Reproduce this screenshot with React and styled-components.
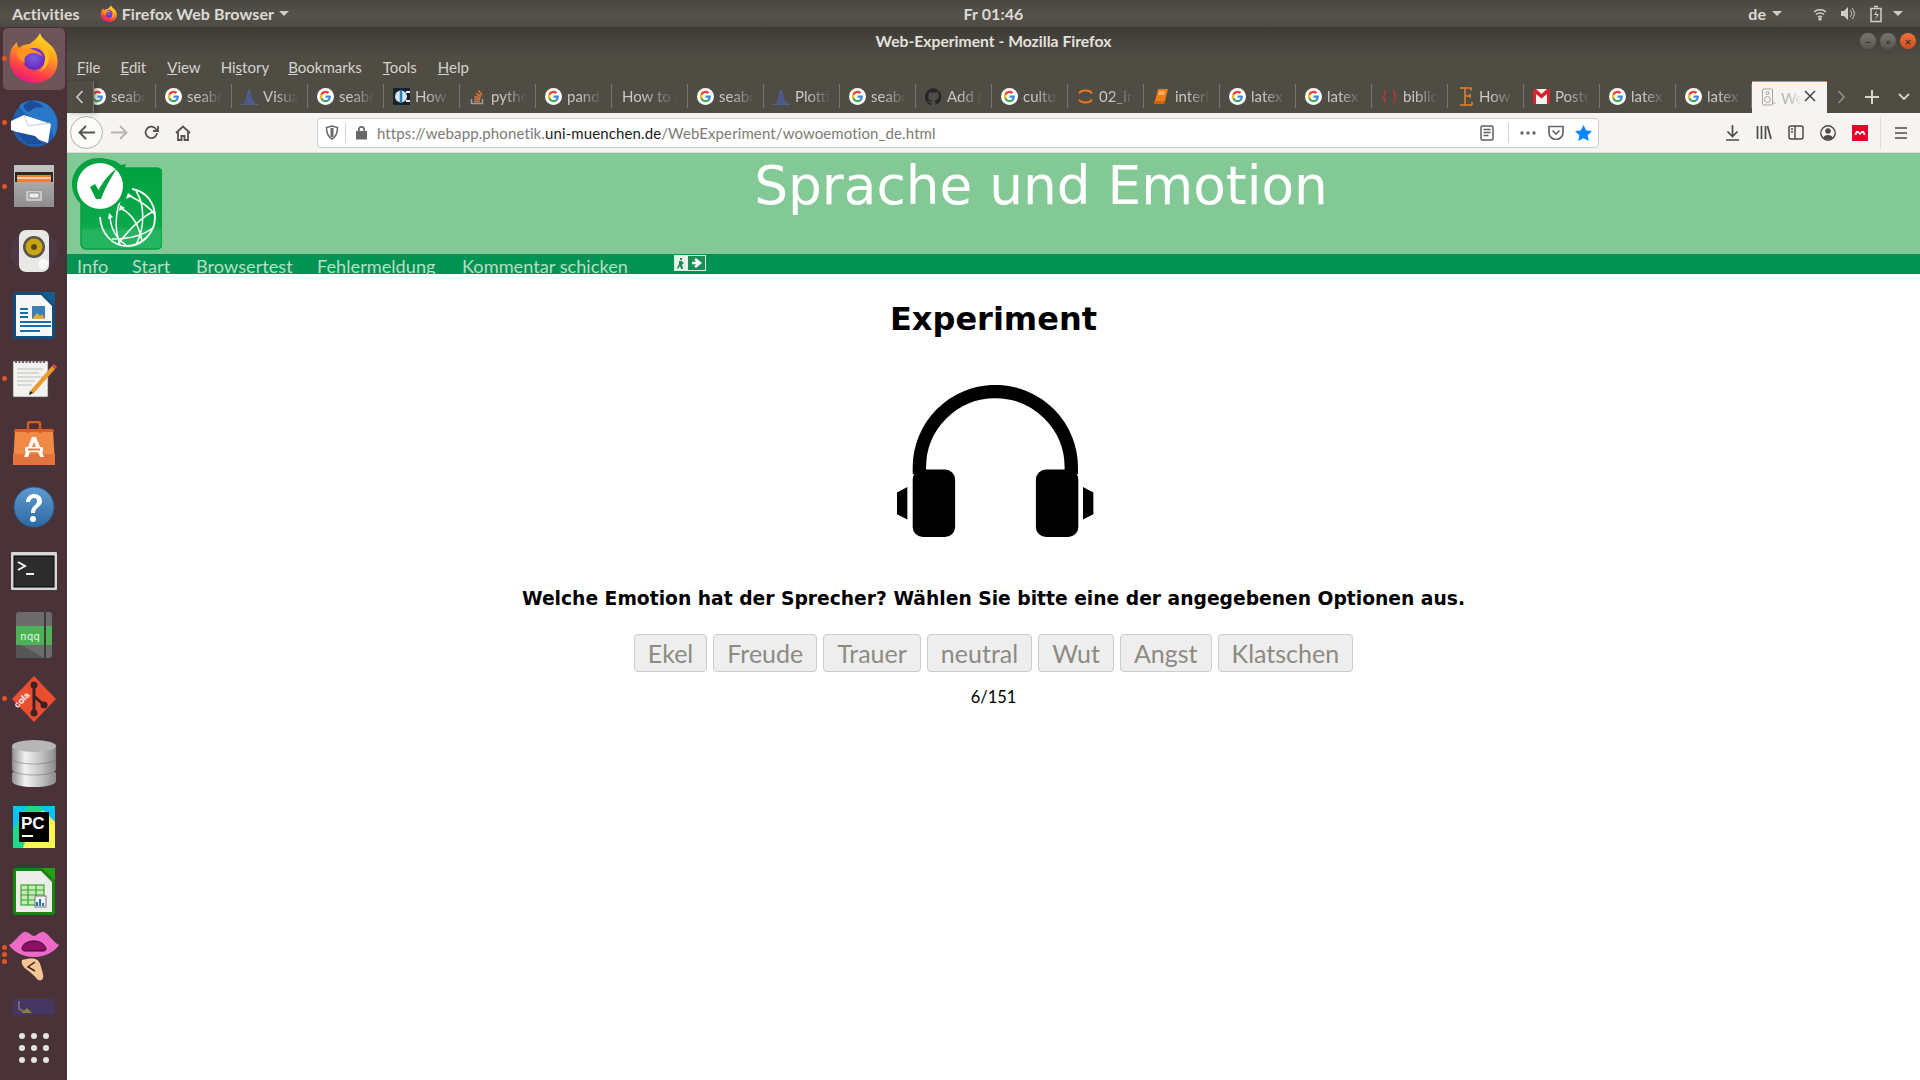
import React from "react";
import styled, { createGlobalStyle } from "styled-components";

const Global = createGlobalStyle`
  html, body { margin: 0; padding: 0; width: 1920px; height: 1080px; overflow: hidden; background: #fff; }
  * { box-sizing: border-box; }
  body { font-family: "Lato", "Noto Sans", sans-serif; }
`;
const Screen = styled.div`display: flex; flex-direction: column; width: 1920px; height: 1080px;`;
const TopBar = styled.header`
  height: 27px; display: flex; align-items: center; position: relative; flex: none;
  background: linear-gradient(#4a4842, #55524b 60%, #4c4a43);
  color: #dcdad5; font-size: 16px; font-weight: 700; letter-spacing: .1px; padding: 0 0 0 12px;
`;
const TopLabel = styled.span`margin-left: ${p => p.$ml || 0}px; white-space: nowrap;`;
const Clock = styled.span`position: absolute; left: 67px; right: 0; text-align: center; pointer-events: none;`;
const TopIcon = styled.span`display: flex; margin-left: ${p => p.$ml || 0}px;`;
const Caret = styled.span`
  width: 0; height: 0; margin-left: ${p => p.$ml || 0}px;
  border-left: 5px solid transparent; border-right: 5px solid transparent; border-top: 5px solid #cfcdc8;
`;
const Main = styled.div`flex: 1; display: flex; min-height: 0;`;
const Dock = styled.nav`width: 67px; flex: none; display: flex; flex-direction: column; background: #4a3338;`;
const DockItem = styled.div`
  height: ${p => p.$h || 64}px; display: flex; align-items: ${p => p.$top ? "flex-start" : "center"}; justify-content: center; position: relative; flex: none;
  margin-top: ${p => p.$auto ? "auto" : 0}; padding-top: ${p => p.$pt || 0}px;
`;
const DockHighlight = styled.div`
  width: 62px; height: 62px; border-radius: 5px; background: #6d5559; display: flex; align-items: center; justify-content: center;
`;
const Pip = styled.i`position: absolute; left: 2px; top: ${p => p.$top ?? 29}px; width: 5px; height: 5px; border-radius: 50%; background: #e95420;`;
const Win = styled.div`flex: 1; display: flex; flex-direction: column; min-width: 0;`;
const TitleBar = styled.div`
  height: 29px; flex: none; display: flex; align-items: center; justify-content: center; position: relative; padding-bottom: 2px;
  background: linear-gradient(#3d3b35, #4f4c44); color: #e3e1dc; font-size: 15.7px; font-weight: 700;
`;
const WinButtons = styled.div`position: absolute; right: 4px; top: 6px; display: flex; gap: 4px;`;
const WinButton = styled.span`
  width: 16px; height: 16px; border-radius: 50%; display: flex; align-items: center; justify-content: center;
  background: ${p => p.$close ? "linear-gradient(#f0703c,#d24d1c)" : "linear-gradient(#78756e,#59564f)"};
  color: #37352f; font-size: 11px; line-height: 1;
`;
const MenuBar = styled.div`
  height: 25px; flex: none; display: flex; align-items: center; background: #4f4c44; padding: 0 0 4px 10px; color: #d5d3cd; font-size: 15px;
`;
const MenuItem = styled.span`margin-right: ${p => p.$mr}px; white-space: nowrap;`;
const Mn = styled.span`text-decoration: underline;`;
const TabBar = styled.div`height: 32px; flex: none; display: flex; align-items: stretch; background: #4f4c44; color: #c9c7c0; position: relative;`;
const TabArrow = styled.div`width: 27px; flex: none; display: flex; align-items: center; justify-content: center; border-right: 1px solid #77756e; z-index: 1; box-shadow: 3px 0 4px rgba(30,30,30,.35);`;
const TabStrip = styled.div`width: 1733px; flex: none; overflow: hidden; display: flex;`;
const Tab = styled.div`
  width: 76px; flex: none; display: flex; align-items: center; position: relative; padding: 0 0 2px ${p => p.$plain ? 10 : 9}px; font-size: 15px; gap: 5px;
  margin-left: ${p => p.$first ? -14 : 0}px;
  &::after { content: ""; position: absolute; right: 0; top: 3px; bottom: 5px; width: 1px; background: ${p => p.$noline ? "transparent" : "#77756e"}; }
`;
const ActiveTab = styled(Tab)`
  background: #f5f4f2; border-top: 2px solid #ee7d53; color: #b8b6b0; width: 75px; margin-top: -1px; padding: 0 0 0 9px;
`;
const TabText = styled.span`
  white-space: nowrap; overflow: hidden; flex: 1; min-width: 0; margin-right: ${p => p.$mr ?? 10}px;
  mask-image: linear-gradient(to right, #000 35%, transparent 100%);
  -webkit-mask-image: linear-gradient(to right, #000 35%, transparent 100%);
`;
const TabClose = styled.span`position: absolute; right: 10px; top: 7px; display: flex;`;
const TabTool = styled.span`position: absolute; top: 0; bottom: 0; left: ${p => p.$x}px; display: flex; align-items: center;`;
const Toolbar = styled.div`height: 40px; flex: none; background: #f5f4f2; display: flex; align-items: center; position: relative; padding-left: 3px; border-bottom: 1px solid #dedcd8;`;
const BackCircle = styled.div`width: 33px; height: 33px; border-radius: 50%; border: 1px solid #b5b3ae; background: #fbfbfa; display: flex; align-items: center; justify-content: center; flex: none;`;
const NavIcon = styled.span`width: 32px; flex: none; display: flex; justify-content: center; align-items: center;`;
const UrlBar = styled.div`
  margin-left: 118px; width: 1282px; height: 30px; flex: none; border: 1px solid #cfcdc9; border-radius: 4px; background: #fff; display: flex; align-items: center; font-size: 15px; padding: 0 6px 0 7px;
`;
const UrlSep = styled.span`width: 1px; height: 20px; background: #d5d3cf; margin: ${p => p.$m || "0 6px"}; flex: none;`;
const Url = styled.span`color: #7d7a75; white-space: nowrap; margin-left: 9px; letter-spacing: .11px; flex: 1;`;
const UrlHost = styled.span`color: #1c1b1a;`;
const UrlIcon = styled.span`display: flex; flex: none; margin-left: ${p => p.$ml || 0}px; margin-right: ${p => p.$mr || 0}px;`;
const ToolRight = styled.div`display: flex; align-items: center; margin-left: 117px;`;
const ToolSlot = styled.span`width: 32px; display: flex; justify-content: center; flex: none;`;
const ToolDiv = styled.span`width: 1px; height: 32px; background: #dedcd8; margin: 0 4px 0 4px; flex: none;`;
const Page = styled.div`flex: 1; display: flex; flex-direction: column; background: #fff; min-height: 0;`;
const SiteHeader = styled.div`height: 101px; flex: none; background: #82c995; display: flex; padding: 2px 0 0 3px;`;
const SiteTitle = styled.h1`
  flex: 1; margin: 0; text-align: center; font: 400 53.3px/62px "DejaVu Sans", sans-serif; color: #fff;
`;
const SiteNav = styled.div`height: 20px; flex: none; background: #009353; display: flex; align-items: center; padding-left: 10px; color: #b9dfc5; font-size: 18.2px; overflow: hidden; position: relative;`;
const SiteLink = styled.span`width: ${p => p.$w}px; flex: none; white-space: nowrap; line-height: 20px; position: relative; top: 2px;`;
const Underlined = styled.span`border-bottom: 1px solid #d7eedd; display: inline-block; line-height: 17px;`;
const ExitBox = styled.span`display: flex; position: relative; top: -1px;`;
const Content = styled.main`flex: 1; display: flex; flex-direction: column; align-items: center; padding-top: 25px;`;
const Heading = styled.h2`margin: 0; font: 700 32px/40px "DejaVu Sans", sans-serif; color: #000;`;
const HeadphonesWrap = styled.div`margin-top: 46px; display: flex; height: 152px; padding-left: 3px;`;
const Question = styled.p`margin: 50px 0 0; font: 700 18.72px/24px "DejaVu Sans", sans-serif; color: #000;`;
const Choices = styled.div`margin-top: 23px; display: flex; gap: 6px;`;
const Choice = styled.button`
  height: 38px; padding: 0 13px; font: 400 25px/36px "Lato", sans-serif; color: #8f8a82; background: #eee; border: 1px solid #ccc; border-radius: 4px;
`;
const Counter = styled.div`margin-top: 15px; font-size: 16.5px; line-height: 20px; color: #000;`;

const G = () => (
  <svg width="17" height="17" viewBox="0 0 24 24" style={{ flex: "none" }}>
    <circle cx="12" cy="12" r="12" fill="#fff" />
    <path d="M19.6 12.2c0-.6-.1-1.1-.2-1.6H12v3h4.3c-.2 1-.7 1.8-1.6 2.4v2h2.5c1.5-1.3 2.4-3.3 2.4-5.8z" fill="#4285f4" />
    <path d="M12 20c2.1 0 3.9-.7 5.2-1.9l-2.5-2c-.7.5-1.6.8-2.7.8-2.1 0-3.8-1.4-4.4-3.3H5v2c1.3 2.6 4 4.4 7 4.4z" fill="#34a853" />
    <path d="M7.6 13.6c-.3-1-.3-2.2 0-3.2v-2H5c-1.1 2.2-1.1 5 0 7.2z" fill="#fbbc05" />
    <path d="M12 7.2c1.2 0 2.2.4 3 1.2l2.2-2.2C15.900 5 14.100 4 12 4 9 4 6.300 5.800 5 8.400l2.600 2c.6-1.900 2.300-3.200 4.400-3.200z" fill="#ea4335" />
  </svg>
);
const Peak = () => (
  <svg width="17" height="17" viewBox="0 0 17 17" style={{ flex: "none" }}>
    <path d="M0 16.500C4 16 5 14 6 8c.5-3 1-6 2-6s1.500 3 2 6c1 5 3 8 7 8.500z" fill="#4b5a8c" stroke="#5d6da3" strokeWidth=".5" />
  </svg>
);
const Favicons = {
  g: <G />,
  peak: <Peak />,
  how: (
    <svg width="17" height="17" viewBox="0 0 17 17" style={{ flex: "none" }}>
      <rect width="17" height="17" fill="#15222f" />
      <circle cx="8" cy="8.500" r="6" fill="#d6e7f0" />
      <path d="M8 2v13" stroke="#2d7fb8" strokeWidth="2.500" />
      <path d="M13 4h4M13 13h4" stroke="#e6eef3" strokeWidth="2" />
    </svg>
  ),
  so: (
    <svg width="17" height="17" viewBox="0 0 17 17" fill="none" stroke="#e8742a" strokeWidth="1.500" style={{ flex: "none" }}>
      <path d="M2.500 11v4.500h11V11" stroke="#a99" />
      <path d="M5 13.500h6M5 11l6 .6M5.500 8.500l6 1.500M7 5.500l5 3M9.500 2.500l3.500 4.500" />
    </svg>
  ),
  gh: (
    <svg width="17" height="17" viewBox="0 0 24 24" fill="#23262b" style={{ flex: "none" }}>
      <path d="M12 .5a12 12 0 0 0-3.800 23.400c.6.100.8-.3.800-.6v-2c-3.300.7-4-1.600-4-1.600-.5-1.400-1.300-1.800-1.300-1.800-1.100-.7.100-.7.100-.7 1.200.1 1.800 1.200 1.800 1.200 1.100 1.800 2.800 1.300 3.500 1 .1-.8.400-1.300.8-1.600-2.700-.3-5.500-1.300-5.500-5.900 0-1.300.5-2.400 1.200-3.200-.1-.3-.5-1.500.1-3.200 0 0 1-.3 3.300 1.200a11.500 11.500 0 0 1 6 0C17.200 4.600 18.200 5 18.200 5c.7 1.700.2 2.900.1 3.200.8.800 1.200 1.900 1.200 3.200 0 4.600-2.800 5.600-5.500 5.900.4.400.8 1.100.8 2.200v3.300c0 .3.200.7.800.6A12 12 0 0 0 12 .5z" />
    </svg>
  ),
  jup: (
    <svg width="17" height="17" viewBox="0 0 17 17" fill="none" stroke="#ee7623" strokeWidth="1.800" style={{ flex: "none" }}>
      <path d="M2 5.500C4 1.500 13 1.500 15 5.500" />
      <path d="M2 11.500C4 15.500 13 15.500 15 11.500" />
    </svg>
  ),
  book: (
    <svg width="17" height="17" viewBox="0 0 17 17" style={{ flex: "none" }}>
      <path d="M5 1h10l-3 12H2z" fill="#ef7d14" />
      <path d="M2 13h10l-.5 3H2.500A1.500 1.500 0 0 1 2 13z" fill="#c9640c" />
      <path d="M6 4h6M5.500 6h6" stroke="#fdd9b5" />
    </svg>
  ),
  bib: <svg width="17" height="17" viewBox="0 0 17 17" fill="none" stroke="#c9303d" strokeWidth="1.400" style={{ flex: "none" }}><path d="M5 2.500c-2 0-1 5-2.500 6C4 9.500 3 14.500 5 14.500M12 2.500c2 0 1 5 2.500 6-1.500 1-.5 6-2.500 6" /></svg>,
  e: <svg width="17" height="19" viewBox="0 0 17 19" fill="none" stroke="#e8832a" strokeWidth="1.500" style={{ flex: "none" }}><path d="M3 1h11M3 18h12M8 1v17M8 9h5M14 .5v3M15 15v3M13 7v4" /></svg>,
  m: (
    <svg width="17" height="15" viewBox="0 0 17 15" style={{ flex: "none" }}>
      <rect width="17" height="15" fill="#f5f3f1" />
      <path d="M0 0h3l5.500 5L14 0h3v15h-3V5L8.500 9.500 3 5v10H0z" fill="#d6242d" />
    </svg>
  ),
  speaker: (
    <svg width="15" height="19" viewBox="0 0 15 19" fill="none" stroke="#a5a39e" style={{ flex: "none" }}>
      <rect x="1.500" y="1" width="10" height="16" rx="1" />
      <circle cx="6.500" cy="11.500" r="3" />
      <circle cx="6.500" cy="5" r="1.500" />
      <path d="M11.500 15h3" />
    </svg>
  ),
};
const tabs = [
  ["g", "seaborn"], ["g", "seaborn"], ["peak", "Visual"], ["g", "seaborn"], ["how", "How to"], ["so", "python"], ["g", "pandas"],
  [null, "How to c"], ["g", "seaborn"], ["peak", "Plotting"], ["g", "seaborn"], ["gh", "Add p"], ["g", "culture"], ["jup", "02_intro"],
  ["book", "interleaf"], ["g", "latex"], ["g", "latex"], ["bib", "biblio"], ["e", "How to"], ["m", "Postein"], ["g", "latex"], ["g", "latex"],
];

const FirefoxIcon = ({ s = 54 }) => (
  <svg width={s} height={s} viewBox="0 0 54 54">
    <defs>
      <linearGradient id="ffa" x1="0.700" y1="0" x2="0.300" y2="1"><stop offset="0" stopColor="#ffe226" /><stop offset=".4" stopColor="#ff9a1f" /><stop offset=".75" stopColor="#ff3d4a" /><stop offset="1" stopColor="#e31587" /></linearGradient>
      <radialGradient id="ffb" cx=".5" cy=".45"><stop offset="0" stopColor="#7e5ee0" /><stop offset="1" stopColor="#6b2bc4" /></radialGradient>
    </defs>
    <path d="M33 1c2 7 9 9 14 16 5 8 5 20-2 27-8 8-21 9-30 4C5 43 1 32 3 22c1-6 4-9 7-12 0 3 1 5 2 6 3-3 7-4 11-4 3-3 8-6 10-11z" fill="url(#ffa)" />
    <circle cx="27" cy="27" r="11" fill="url(#ffb)" />
    <path d="M9 19c4-3 12-4 18-1 5 2 7 3 9 7-4-4-10-5-14-3-5 3-5 5-4 9-5-2-8-7-9-12z" fill="#ff9320" />
    <path d="M38 27c1-7-2-12-7-14 8 0 12 7 11 14-1 6-4 11-10 13 4-3 6-8 6-13z" fill="#ffbd1f" />
  </svg>
);
const Thunderbird = () => (
  <svg width="50" height="50" viewBox="0 0 50 50">
    <circle cx="26" cy="26" r="23" fill="#1f5fb0" />
    <path d="M10 8C18 0 34 1 42 10c7 8 8 20 3 29-3-9-9-14-17-17C20 19 14 15 10 8z" fill="#2a79c9" />
    <path d="M15 7c3-4 8-5 12-3 4 1 6 3 8 6-6-2-11 0-15 4-3-1-6-4-5-7z" fill="#1d4e9a" />
    <path d="M2 23l13-6 27 9-3 19L2 32z" fill="#fff" />
    <path d="M15 17l4 11 22-3" fill="none" stroke="#c9cdd3" strokeWidth="1" />
    <path d="M8 34l10 12h16l-8-8z" fill="#1d4e9a" />
  </svg>
);
const Files = () => (
  <svg width="44" height="46" viewBox="0 0 44 46">
    <defs><linearGradient id="fa" x1="0" x2="0" y1="0" y2="1"><stop offset="0" stopColor="#a9a9a9" /><stop offset="1" stopColor="#8e8e8e" /></linearGradient></defs>
    <rect x="0" y="0" width="40" height="42" rx="1" fill="#c1c1c1" transform="translate(2,1)" />
    <rect x="3" y="8" width="38" height="10" fill="#2a2624" />
    <rect x="5" y="11" width="34" height="7" fill="#ee7d3b" />
    <path d="M5 14h34" stroke="#fbe7c6" strokeWidth="1.500" />
    <rect x="2" y="18" width="40" height="25" fill="url(#fa)" />
    <rect x="14" y="27" width="16" height="10" rx="1" fill="#c9c9c9" />
    <rect x="17" y="29" width="10" height="5" fill="#eee" stroke="#555" strokeWidth=".6" />
  </svg>
);
const Speaker = () => (
  <svg width="50" height="46" viewBox="0 0 50 46">
    <ellipse cx="25" cy="23" rx="24" ry="22" fill="#50465a" opacity=".35" />
    <rect x="10" y="2" width="30" height="42" rx="7" fill="#e8e8e4" />
    <circle cx="25" cy="19" r="11" fill="#55544f" />
    <circle cx="25" cy="19" r="8.500" fill="#c9a512" />
    <circle cx="25" cy="19" r="3" fill="#5a4a10" />
    <circle cx="34" cy="36" r="5" fill="#fafafa" />
  </svg>
);
const Writer = () => (
  <svg width="42" height="48" viewBox="0 0 42 48">
    <path d="M0 4a3 3 0 0 1 3-3h26l13 13v31a3 3 0 0 1-3 3H3a3 3 0 0 1-3-3z" fill="#144e7c" />
    <path d="M3 4h25l11 11v30H3z" fill="#f7f7f7" />
    <path d="M28 1h14v13z" fill="#155d90" />
    <path d="M8 18h8M8 22h8M8 26h8M8 31h31M8 35h31M8 40h20" stroke="#1a6ea8" strokeWidth="2" transform="translate(-1,0)" />
    <rect x="19" y="15" width="13" height="13" fill="#3b7eb8" />
    <path d="M19 28l5-6 3 3 2-2 3 5z" fill="#e9a93c" />
  </svg>
);
const Notepad = () => (
  <svg width="46" height="38" viewBox="0 0 46 38">
    <rect x="2" y="1" width="35" height="36" rx="1" fill="#f2f2f0" stroke="#555" strokeWidth=".6" />
    <path d="M4 2h31" stroke="#666" strokeWidth="2" strokeDasharray="2 1.500" />
    <path d="M6 9h26M6 13h22M6 17h26M6 21h18M6 25h15" stroke="#bdbdbd" strokeWidth="1" />
    <path d="M20 30L41 6l3 3-21 24-5 2z" fill="#eb9a2a" />
    <path d="M41 6l2-2 3 3-2 2z" fill="#d24b47" />
    <path d="M18 35l1-4 3 2z" fill="#222" />
  </svg>
);
const Shop = () => (
  <svg width="42" height="44" viewBox="0 0 42 44">
    <path d="M2 8h38l2 36H0z" fill="#f08a44" />
    <path d="M0 33h42v11H0z" fill="#e0743a" />
    <path d="M15 8V3a2 2 0 0 1 2-2h8a2 2 0 0 1 2 2v5M15 8v4M27 8v4" fill="none" stroke="#d65a24" strokeWidth="2.500" />
    <path d="M2 8h38l1 3H1z" fill="#d95d27" />
    <path d="M19 16h4l8 20h-4l-6-15-6 15h-4z" fill="#fff" />
    <rect x="12" y="26" width="18" height="5" rx="1.500" fill="#fff" />
    <rect x="15" y="27.500" width="12" height="2" fill="#ee7d3b" />
  </svg>
);
const Help = () => (
  <svg width="42" height="42" viewBox="0 0 42 42">
    <defs><linearGradient id="he" x1="0" x2="0" y1="0" y2="1"><stop offset="0" stopColor="#5f9bd0" /><stop offset="1" stopColor="#2e6aa3" /></linearGradient></defs>
    <circle cx="21" cy="21" r="20" fill="url(#he)" stroke="#2a5c90" />
    <path d="M13 16c0-5 4-8 8-8 5 0 8 3 8 7 0 6-7 6-7 12h-4c0-8 6-7 6-12 0-2-1-3-3-3s-4 2-4 4z" fill="#fff" />
    <circle cx="20" cy="33" r="3" fill="#fff" />
  </svg>
);
const Terminal = () => (
  <svg width="46" height="38" viewBox="0 0 46 38">
    <rect x="0" y="0" width="46" height="38" rx="1" fill="#d7d7d5" />
    <rect x="3" y="4" width="40" height="31" fill="#2c2c2c" stroke="#000" />
    <path d="M7 10l7 4-7 4" fill="none" stroke="#f2f2f2" strokeWidth="2" />
    <path d="M15 22h8" stroke="#f2f2f2" strokeWidth="2" />
  </svg>
);
const Nqq = () => (
  <svg width="36" height="46" viewBox="0 0 36 46">
    <rect width="36" height="46" rx="3" fill="#6b6b6b" />
    <path d="M0 30l28 16H3a3 3 0 0 1-3-3z" fill="#555" />
    <rect y="14" width="36" height="19" fill="#4db255" />
    <rect x="28" width="2" height="46" fill="#3d3b3b" />
    <text x="14" y="28" fontFamily="DejaVu Sans Mono, monospace" fontSize="11" textAnchor="middle" fill="#dff3e1">nqq</text>
  </svg>
);
const Git = () => (
  <svg width="44" height="46" viewBox="0 0 44 46">
    <path d="M22 0l22 23-22 23L0 23z" fill="#ea4e2e" />
    <path d="M22 9v28M22 20l10 9" stroke="#3a2327" strokeWidth="3" fill="none" />
    <circle cx="22" cy="9" r="3.500" fill="#3a2327" /><circle cx="22" cy="37" r="3.500" fill="#3a2327" /><circle cx="32" cy="29" r="3.500" fill="#3a2327" />
    <text x="12" y="26" fontFamily="Liberation Sans, sans-serif" fontSize="9" fontWeight="700" fill="#fff" transform="rotate(-45 12 26)" textAnchor="middle">cola</text>
  </svg>
);
const Database = () => (
  <svg width="46" height="48" viewBox="0 0 46 48">
    <defs><linearGradient id="db" x1="0" x2="1" y1="0" y2="0"><stop offset="0" stopColor="#8f8f8f" /><stop offset=".3" stopColor="#f2f2f2" /><stop offset=".7" stopColor="#bdbdbd" /><stop offset="1" stopColor="#8a8a8a" /></linearGradient></defs>
    <path d="M1 34c0-3 44-3 44 0v8c0 8-44 8-44 0z" fill="url(#db)" />
    <path d="M1 20c0-3 44-3 44 0v10c0 8-44 8-44 0z" fill="url(#db)" stroke="#666" strokeWidth=".5" />
    <path d="M1 7v12c0 8 44 8 44 0V7z" fill="url(#db)" stroke="#666" strokeWidth=".5" />
    <ellipse cx="23" cy="7" rx="22" ry="6" fill="#b6b6b6" />
  </svg>
);
const PyCharm = () => (
  <svg width="42" height="42" viewBox="0 0 42 42">
    <rect width="42" height="42" fill="#21d789" />
    <path d="M22 8L42 0v42H10z" fill="#fcf84a" />
    <path d="M26 0h16v16z" fill="#07c3f2" />
    <path d="M0 0h14L0 24z" fill="#07c3f2" />
    <rect x="6" y="6" width="30" height="30" fill="#000" />
    <text x="8" y="23" fontFamily="Liberation Sans, sans-serif" fontSize="17" fontWeight="700" fill="#fff">PC</text>
    <rect x="9" y="29" width="11" height="2" fill="#fff" />
  </svg>
);
const Calc = () => (
  <svg width="42" height="48" viewBox="0 0 42 48">
    <path d="M0 4a3 3 0 0 1 3-3h26l13 13v31a3 3 0 0 1-3 3H3a3 3 0 0 1-3-3z" fill="#18850f" />
    <path d="M3 4h25l11 11v30H3z" fill="#ececea" />
    <path d="M29 1h13v13z" fill="#23a014" />
    <g fill="none" stroke="#3aa52e" strokeWidth="1.200"><rect x="8" y="18" width="23" height="20" fill="#c6e8bb" /><path d="M8 23h23M8 28h23M8 33h23M15 18v20M23 18v20" /></g>
    <rect x="22" y="29" width="11" height="11" fill="#f4f4f4" stroke="#777" />
    <path d="M24 39v-4M27 39v-7M30 39v-3" stroke="#2b6fb8" strokeWidth="2" />
  </svg>
);
const Lips = () => (
  <svg width="50" height="54" viewBox="0 0 50 54">
    <path d="M0 17C6 14 10 6 15 4c4-1 7 4 10 4 3 0 6-5 10-4 5 2 9 10 15 13-4 6-13 12-25 12S4 23 0 17z" fill="#ee6ac7" />
    <path d="M13 20c1-5 7-7 12-7 6 0 11 3 12 8 0 1-1 2-3 2H16c-2 0-3-1-3-3z" fill="#8f0f66" stroke="#2a1020" />
    <path d="M13 32c4-1 10-2 13-1 4 1 5 4 6 8 1 4 3 8 2 11-1 3-4 3-6 1-3-4-7-7-11-10-3-2-5-6-4-9z" fill="#f6c795" />
    <path d="M26 34l-7 5 7 4" fill="none" stroke="#3a2620" strokeWidth="1.500" />
  </svg>
);
const Dim = () => (
  <svg width="44" height="16" viewBox="0 0 44 16">
    <rect width="42" height="16" x="1" rx="2" fill="#453762" />
    <path d="M7 2v8l6 3" stroke="#706a72" strokeWidth="2" fill="none" />
    <path d="M9 14l6-5 5 5z" fill="#8f7c3b" />
  </svg>
);
const Grid = () => (
  <svg width="30" height="30" viewBox="0 0 30 30" fill="#e4e3e2">
    {[3, 15, 27].flatMap(y => [3, 15, 27].map(x => <circle key={`${x}-${y}`} cx={x} cy={y} r="3" />))}
  </svg>
);
const Logo = () => (
  <svg width="92" height="96" viewBox="0 0 92 96" style={{ flex: "none" }}>
    <defs><linearGradient id="lg" x1="0" x2="0" y1="0" y2="1"><stop offset="0" stopColor="#00a23f" /><stop offset=".72" stopColor="#0aa84b" /><stop offset=".78" stopColor="#25b45f" /><stop offset="1" stopColor="#25b45f" /></linearGradient></defs>
    <rect x="11" y="13" width="81" height="81" rx="5" fill="url(#lg)" stroke="#00a23f" strokeWidth="1.500" />
    <g fill="none" stroke="#fff" strokeWidth="1.500">
      <path d="M62 34C76 36 85 48 85 62 85 78 72 91 57 91 42 91 31 78 30 62" strokeWidth="1.800" />
      <path d="M66 36C74 48 76 70 66 90" />
      <path d="M56 35C46 48 43 72 50 89" />
      <path d="M48 89C58 76 72 62 84 56" />
      <path d="M42 84C56 84 72 82 84 72" />
      <path d="M60 41C68 45 80 52 85 60" />
      <path d="M52 54C60 58 68 66 72 86" />
      <path d="M40 62C41 74 47 84 56 90" />
    </g>
    <path d="M58 38l-2 6 6-3zM50 50l-1 6 6-3zM39 58l-1 6 5-2z" fill="#fff" />
    <path d="M28 3c9 0 17 2 23 7l5-1-2 6c3 4 4 9 4 14 0 14-12 26-29 26C13 55 2 43 2 29 2 15 14 3 28 3z" fill="#00a23f" />
    <circle cx="30" cy="31" r="23" fill="#fff" />
    <path d="M20 32l5-3 3.500 6C33 27 38 20 47 13 40 24 35 33 31 44h-5z" fill="#00a23f" />
  </svg>
);
const Headphones = () => (
  <svg width="197" height="152" viewBox="50 45 590 455">
    <path d="M117 312V292A227.500 227.500 0 0 1 572 292V312" fill="none" stroke="#000" strokeWidth="40" />
    <rect x="97" y="298" width="127" height="202" rx="30" />
    <rect x="466" y="298" width="127" height="202" rx="30" />
    <path d="M50 367L81 350V448L50 432z M607 350L638 367V432L607 448z" />
  </svg>
);

export default function App() {
  return (
    <Screen>
      <Global />
      <TopBar>
        <TopLabel>Activities</TopLabel>
        <TopIcon $ml={20}><FirefoxIcon s={18} /></TopIcon>
        <TopLabel $ml={4}>Firefox Web Browser</TopLabel>
        <Caret $ml={5} />
        <Clock>Fr 01:46</Clock>
        <TopLabel $ml={1459}>de</TopLabel>
        <Caret $ml={6} />
        <TopIcon $ml={31} style={{ color: "#cfcdc8" }}>
          <svg width="14" height="14" viewBox="0 0 14 14" fill="none" stroke="currentColor" strokeWidth="1.500"><path d="M1 5c3-3 9-3 12 0M3 7.500c2-2 6-2 8 0M5 10c1-1 3-1 4 0" /><circle cx="7" cy="12" r="1" fill="currentColor" /></svg>
        </TopIcon>
        <TopIcon $ml={13} style={{ color: "#cfcdc8" }}>
          <svg width="15" height="15" viewBox="0 0 15 15" fill="currentColor"><path d="M1 5h3l4-4v13l-4-4H1z" /><path d="M10 4c2 2 2 5 0 7M12 2c3 3 3 8 0 11" fill="none" stroke="currentColor" /></svg>
        </TopIcon>
        <TopIcon $ml={15} style={{ color: "#cfcdc8" }}>
          <svg width="12" height="18" viewBox="0 0 12 18" fill="none" stroke="currentColor" strokeWidth="1.500"><path d="M4 1.500h4M1 3.500h10v13H1z" /><path d="M7 5L4 10h3l-2 5 4-6H6z" fill="currentColor" stroke="none" /></svg>
        </TopIcon>
        <Caret $ml={11} />
      </TopBar>
      <Main>
        <Dock>
          <DockItem><DockHighlight><FirefoxIcon /></DockHighlight><Pip /></DockItem>
          <DockItem><Thunderbird /><Pip /></DockItem>
          <DockItem><Files /><Pip /></DockItem>
          <DockItem><Speaker /></DockItem>
          <DockItem><Writer /></DockItem>
          <DockItem><Notepad /><Pip /></DockItem>
          <DockItem><Shop /></DockItem>
          <DockItem><Help /></DockItem>
          <DockItem><Terminal /></DockItem>
          <DockItem><Nqq /></DockItem>
          <DockItem><Git /><Pip /></DockItem>
          <DockItem><Database /></DockItem>
          <DockItem><PyCharm /></DockItem>
          <DockItem><Calc /></DockItem>
          <DockItem><Lips /><Pip $top={22} /><Pip $top={29} /><Pip $top={36} /></DockItem>
          <DockItem $h={29} $top $pt={12}><Dim /></DockItem>
          <DockItem $auto><Grid /></DockItem>
        </Dock>
        <Win>
          <TitleBar>
            Web-Experiment - Mozilla Firefox
            <WinButtons>
              <WinButton>–</WinButton><WinButton>▫</WinButton><WinButton $close>×</WinButton>
            </WinButtons>
          </TitleBar>
          <MenuBar>
            <MenuItem $mr={20}><Mn>F</Mn>ile</MenuItem>
            <MenuItem $mr={21}><Mn>E</Mn>dit</MenuItem>
            <MenuItem $mr={20}><Mn>V</Mn>iew</MenuItem>
            <MenuItem $mr={19}>Hi<Mn>s</Mn>tory</MenuItem>
            <MenuItem $mr={21}><Mn>B</Mn>ookmarks</MenuItem>
            <MenuItem $mr={21}><Mn>T</Mn>ools</MenuItem>
            <MenuItem $mr={0}><Mn>H</Mn>elp</MenuItem>
          </MenuBar>
          <TabBar>
            <TabArrow>
              <svg width="10" height="16" viewBox="0 0 10 16" fill="none" stroke="#c9c7c0" strokeWidth="1.800"><path d="M7.500 2L2 8l5.500 6" /></svg>
            </TabArrow>
            <TabStrip>
              {tabs.map(([k, t], i) => (
                <Tab key={i} $first={i === 0} $plain={!k}>
                  {k && Favicons[k]}
                  <TabText>{t}</TabText>
                </Tab>
              ))}
              <ActiveTab $noline>
                {Favicons.speaker}
                <TabText $mr={24}>Web</TabText>
                <TabClose>
                  <svg width="14" height="14" viewBox="0 0 14 14" stroke="#444" strokeWidth="1.500"><path d="M2 2l10 10M12 2L2 12" /></svg>
                </TabClose>
              </ActiveTab>
            </TabStrip>
            <TabTool $x={1769}><svg width="10" height="16" viewBox="0 0 10 16" fill="none" stroke="#8f8c85" strokeWidth="1.800"><path d="M2.500 2L8 8l-5.500 6" /></svg></TabTool>
            <TabTool $x={1798}><svg width="14" height="14" viewBox="0 0 14 14" stroke="#d5d3cd" strokeWidth="2"><path d="M7 0v14M0 7h14" /></svg></TabTool>
            <TabTool $x={1831}><svg width="12" height="8" viewBox="0 0 12 8" fill="none" stroke="#d5d3cd" strokeWidth="1.800"><path d="M1 1l5 5 5-5" /></svg></TabTool>
          </TabBar>
          <Toolbar>
            <BackCircle>
              <svg width="17" height="15" viewBox="0 0 17 15" fill="none" stroke="#55534f" strokeWidth="1.800"><path d="M8 1L1.500 7.500 8 14M2 7.500h15" /></svg>
            </BackCircle>
            <NavIcon>
              <svg width="17" height="15" viewBox="0 0 17 15" fill="none" stroke="#b5b3ae" strokeWidth="1.800"><path d="M9 1l6.500 6.500L9 14M15 7.500H0" /></svg>
            </NavIcon>
            <NavIcon>
              <svg width="15" height="15" viewBox="0 0 15 15" fill="none" stroke="#55534f" strokeWidth="1.800"><path d="M13 8a5.700 5.700 0 1 1-1.500-4.500L13.500 6" /><path d="M14 1v5H9" /></svg>
            </NavIcon>
            <NavIcon>
              <svg width="16" height="16" viewBox="0 0 16 16" fill="none" stroke="#55534f" strokeWidth="1.800"><path d="M1 8l7-6.500L15 8M3 6.500V15h3.500v-4h3v4H13V6.500" /></svg>
            </NavIcon>
            <UrlBar>
              <UrlIcon>
                <svg width="14" height="15" viewBox="0 0 14 15" fill="none" stroke="#6a6864" strokeWidth="1.500"><path d="M7 1l5.500 1.500c0 5-1 9-5.500 11.500C2.500 11.500 1.500 7.500 1.500 2.500z" /><path d="M7 3v9" strokeWidth="3" /></svg>
              </UrlIcon>
              <UrlSep />
              <UrlIcon $ml={3}>
                <svg width="13" height="15" viewBox="0 0 13 15" fill="#6a6864"><path d="M3 6V4.500a3.500 3.500 0 0 1 7 0V6h2v8.500H1V6zm1.700 0h3.600V4.500a1.800 1.800 0 0 0-3.600 0z" /></svg>
              </UrlIcon>
              <Url>https://webapp.phonetik.<UrlHost>uni-muenchen.de</UrlHost>/WebExperiment/wowoemotion_de.html</Url>
              <UrlIcon $mr={1}>
                <svg width="14" height="16" viewBox="0 0 14 16" fill="none" stroke="#5f5d59" strokeWidth="1.500"><rect x="1" y="1" width="12" height="14" rx="1.500" /><path d="M3.500 4.500h7M3.500 7.500h7M3.500 10.500h5" /></svg>
              </UrlIcon>
              <UrlSep $m="0 11px 0 13px" />
              <UrlIcon>
                <svg width="16" height="4" viewBox="0 0 16 4" fill="#6a6864"><circle cx="2" cy="2" r="1.700" /><circle cx="8" cy="2" r="1.700" /><circle cx="14" cy="2" r="1.700" /></svg>
              </UrlIcon>
              <UrlIcon $ml={12}>
                <svg width="16" height="15" viewBox="0 0 16 15" fill="none" stroke="#6a6864" strokeWidth="1.700"><path d="M1 1.500h14v6a7 7 0 0 1-14 0z" /><path d="M4.500 5.500L8 9l3.500-3.500" /></svg>
              </UrlIcon>
              <UrlIcon $ml={11}>
                <svg width="17" height="16" viewBox="0 0 17 16" fill="#0a84ff"><path d="M8.500 0l2.600 5.300 5.900.9-4.300 4.100 1 5.700-5.200-2.700L3.300 16l1-5.700L0 6.200l5.900-.9z" /></svg>
              </UrlIcon>
            </UrlBar>
            <ToolRight>
              <ToolSlot><svg width="15" height="16" viewBox="0 0 15 16" fill="none" stroke="#4d4b47" strokeWidth="1.700"><path d="M7.500 0v11M2.500 6.500l5 5 5-5M1 15h13" /></svg></ToolSlot>
              <ToolSlot><svg width="16" height="15" viewBox="0 0 16 15" fill="none" stroke="#4d4b47" strokeWidth="1.700"><path d="M1.500 1v13M5.500 1v13M9.500 1v13M11.500 1l3.500 13" /></svg></ToolSlot>
              <ToolSlot><svg width="16" height="15" viewBox="0 0 16 15" fill="none" stroke="#4d4b47" strokeWidth="1.500"><rect x="1" y="1" width="14" height="13" rx="2" /><path d="M7 1v13" /><path d="M3 4h2M3 7h2" /></svg></ToolSlot>
              <ToolSlot><svg width="16" height="16" viewBox="0 0 16 16"><circle cx="8" cy="8" r="7.200" fill="none" stroke="#4d4b47" strokeWidth="1.400" /><circle cx="8" cy="6" r="2.800" fill="#4d4b47" /><path d="M3 13c1-4 9-4 10 0-2 2-8 2-10 0z" fill="#4d4b47" /></svg></ToolSlot>
              <ToolSlot><svg width="16" height="16" viewBox="0 0 16 16"><rect width="16" height="16" fill="#e8002b" /><path d="M2.500 10l1.500-4h2.500l1.500 2 1.500-2H12l1.500 4h-2L11 8H10l-2 2-2-2H5l-.5 2z" fill="#fff" /></svg></ToolSlot>
              <ToolDiv />
              <ToolSlot><svg width="14" height="14" viewBox="0 0 14 14" stroke="#4d4b47" strokeWidth="1.700"><path d="M1 2h12M1 7h12M1 12h12" /></svg></ToolSlot>
            </ToolRight>
          </Toolbar>
          <Page>
            <SiteHeader>
              <Logo />
              <SiteTitle>Sprache und Emotion</SiteTitle>
            </SiteHeader>
            <SiteNav>
              <SiteLink $w={55}>Info</SiteLink>
              <SiteLink $w={64}>Start</SiteLink>
              <SiteLink $w={121}>Browsertest</SiteLink>
              <SiteLink $w={145}><Underlined>Fehlermeldung</Underlined></SiteLink>
              <SiteLink $w={212}><Underlined>Kommentar schicken</Underlined></SiteLink>
              <ExitBox>
                <svg width="32" height="16" viewBox="0 0 32 16">
                  <rect x=".5" y=".5" width="31" height="15" fill="#1e8c55" stroke="#d6ecdc" />
                  <rect x="1" y="1" width="13" height="14" fill="#e7f3ea" />
                  <path d="M6 3l2 0 0 2-2 0zM5 6l3 0 2 3-2 0 1 5-2 0-1-3-2 3-1-1 2-4z" fill="#1e8c55" />
                  <path d="M18 8h7M21 4l5 4-5 4" fill="none" stroke="#fff" strokeWidth="2.500" />
                </svg>
              </ExitBox>
            </SiteNav>
            <Content>
              <Heading>Experiment</Heading>
              <HeadphonesWrap><Headphones /></HeadphonesWrap>
              <Question>Welche Emotion hat der Sprecher? Wählen Sie bitte eine der angegebenen Optionen aus.</Question>
              <Choices>
                {["Ekel", "Freude", "Trauer", "neutral", "Wut", "Angst", "Klatschen"].map(c => <Choice key={c}>{c}</Choice>)}
              </Choices>
              <Counter>6/151</Counter>
            </Content>
          </Page>
        </Win>
      </Main>
    </Screen>
  );
}
